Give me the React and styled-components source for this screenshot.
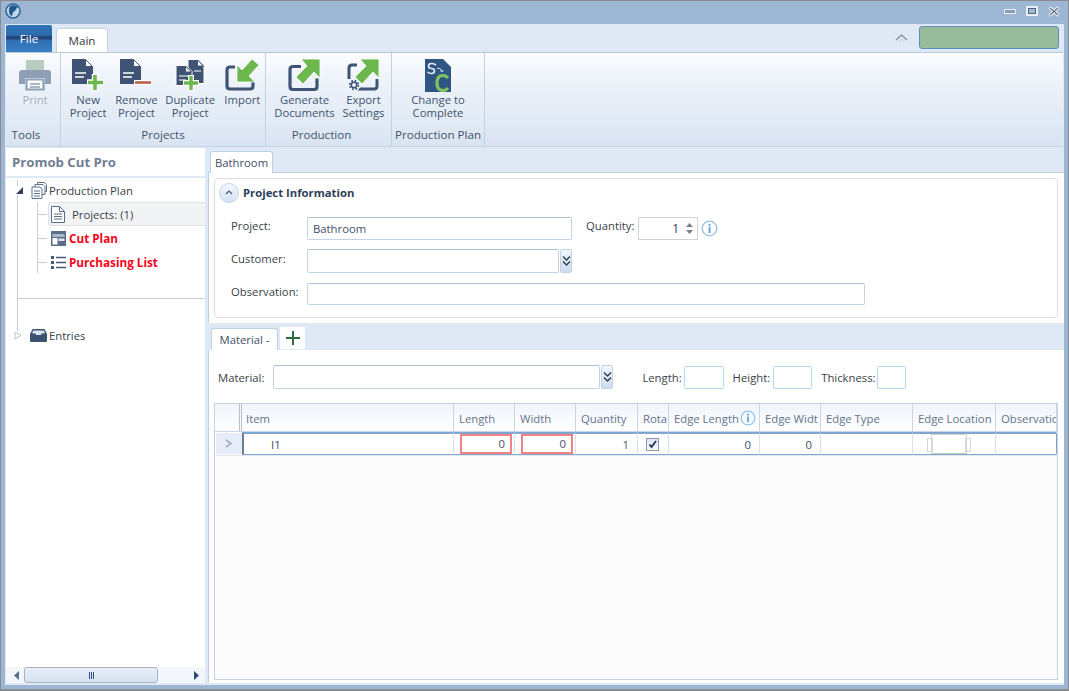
import React from "react";
import styled, { createGlobalStyle } from "styled-components";

const GlobalStyle = createGlobalStyle`
  html, body { margin: 0; padding: 0; height: 100%; overflow: hidden; }
  #root { height: 100%; }
  * { box-sizing: border-box; }
  body { font-family: "Open Sans", "Noto Sans", sans-serif; font-size: 11.3px; color: #2e3f57; }
`;

const NAVY = "#3f5474";
const GREEN = "#6db74f";

const Window = styled.div`
  width: 1069px;
  height: 691px;
  display: flex;
  flex-direction: column;
  background: #9cb6d3;
  border: 1px solid #8b8b8b;
  border-bottom-width: 2px;
  padding: 0 4px 4px 4px;
`;

const TitleBar = styled.div`
  height: 23px;
  flex: none;
  display: flex;
  align-items: center;
  justify-content: space-between;
  padding: 0 4px 3px 0;
`;

const WindowButtons = styled.div`
  display: flex;
  align-items: center;
  gap: 10px;
`;

const Shell = styled.div`
  flex: 1;
  min-height: 0;
  display: flex;
  flex-direction: column;
  background: #dfe8f5;
  padding: 0 0 2px 1px;
`;

const TabRow = styled.div`
  height: 28px;
  flex: none;
  display: flex;
  align-items: flex-end;
  gap: 4px;
  padding-right: 5px;
`;

const FileTab = styled.div`
  width: 46px;
  height: 27px;
  align-self: flex-end;
  display: flex;
  align-items: center;
  justify-content: center;
  color: #fff;
  font-size: 11.6px;
  border-radius: 2px 2px 0 0;
  background: linear-gradient(#2f72b6 0, #2c6cae 38%, #24487f 42%, #24487f 52%, #2e6fb2 56%, #3a80c4 100%);
`;

const MainTab = styled.div`
  width: 52px;
  height: 24px;
  display: flex;
  align-items: center;
  justify-content: center;
  color: #33363b;
  font-size: 11.6px;
  background: #fff;
  border: 1px solid #c6d3e4;
  border-bottom: none;
  border-radius: 3px 3px 0 0;
`;

const RightTools = styled.div`
  margin-left: auto;
  margin-bottom: 1px;
  display: flex;
  align-items: center;
  gap: 11px;
  align-self: center;
`;

const AccountBox = styled.div`
  width: 140px;
  height: 23px;
  background: #98bb9c;
  border: 1px solid #5f8fbf;
  border-radius: 3px;
`;

const Ribbon = styled.div`
  height: 95px;
  flex: none;
  display: flex;
  background: linear-gradient(#fbfcfe 0, #eef3fa 30%, #d9e4f2 100%);
  border-top: 1px solid #b9c9dd;
  border-bottom: 1px solid #c5d3e5;
  margin-right: 1px;
`;

const RibbonGroup = styled.div`
  width: ${p => p.$width}px;
  flex: none;
  display: flex;
  flex-direction: column;
  border-right: 1px solid #c3d0e1;
`;

const GroupButtons = styled.div`
  flex: 1;
  display: flex;
  justify-content: center;
  padding: 6px 0 0 ${p => p.$left || 0}px;
`;

const GroupLabel = styled.div`
  height: 21px;
  text-align: center;
  color: #43556e;
  font-size: 11.6px;
  line-height: 20px;
  padding-right: ${p => p.$shift || 0}px;
`;

const RibbonButton = styled.div`
  width: ${p => p.$width}px;
  display: flex;
  flex-direction: column;
  align-items: center;
  text-align: center;
  line-height: 13px;
  color: ${p => (p.$disabled ? "#a4adba" : "#40536f")};
`;

const ButtonIcon = styled.div`
  height: 34px;
  flex: none;
`;

const Body = styled.div`
  flex: 1;
  min-height: 0;
  display: flex;
  padding-top: 1px;
`;

const Sidebar = styled.div`
  width: 199px;
  flex: none;
  display: flex;
  flex-direction: column;
  background: #fff;
`;

const SidebarTitle = styled.div`
  height: 30px;
  flex: none;
  padding: 5px 0 0 6px;
  font-size: 13.200px;
  font-weight: 700;
  color: #6f7e94;
  border-bottom: 2px solid #dfe8f5;
`;

const TreeArea = styled.div`
  flex: 1;
  min-height: 0;
  position: relative;
  &::before {
    content: "";
    position: absolute;
    left: 11px;
    top: 2px;
    height: 155px;
    border-left: 1px solid #c9ced6;
  }
`;

const TreeRow = styled.div`
  height: 24px;
  display: flex;
  align-items: center;
  gap: ${p => p.$gap || 2}px;
  padding-left: ${p => p.$indent}px;
  color: ${p => (p.$alert ? "#f5051c" : "#3a3f48")};
  font-weight: ${p => (p.$alert ? 700 : 400)};
  font-size: ${p => (p.$alert ? 11.7 : 11.3)}px;
  position: relative;
  &::before {
    content: "";
    display: ${p => (p.$branch ? "block" : "none")};
    position: absolute;
    left: 31px;
    top: 12px;
    width: 10px;
    border-top: 1px solid #c9ced6;
  }
`;

const Expander = styled.div`
  width: 9px;
  height: 9px;
  display: flex;
  margin-right: 5px;
  position: relative;
  z-index: 1;
  background: #fff;
`;

const SelectedRow = styled(TreeRow)`
  background: #f2f3f4;
  border: 1px solid #dfe1e4;
  border-right: none;
  border-radius: 3px 0 0 3px;
  margin-left: 42px;
  padding-left: 2px;
  gap: 7px;
  &::before { display: block; left: -12px; top: 11px; }
`;

const TreeBranch = styled.div`
  position: relative;
  &::before {
    content: "";
    position: absolute;
    left: 31px;
    top: 0;
    height: 71px;
    border-left: 1px solid #c9ced6;
  }
`;

const TreeDivider = styled.div`
  margin: 24px 0 24px 11px;
  border-top: 1px solid #c9ced6;
`;

const HScroll = styled.div`
  height: 16px;
  flex: none;
  display: flex;
  align-items: center;
  background: #f3f7fc;
  padding: 0 6px 0 8px;
  justify-content: space-between;
`;

const ScrollThumb = styled.div`
  width: 134px;
  height: 16px;
  margin-left: 5px;
  margin-right: auto;
  border: 1px solid #aab4c0;
  border-radius: 3px;
  background: linear-gradient(#e8eef7, #d6e2f1);
  display: flex;
  align-items: center;
  justify-content: center;
  gap: 1px;
  i { width: 1px; height: 7px; background: #2e4a7a; }
`;

const Main = styled.div`
  flex: 1;
  min-width: 0;
  display: flex;
  flex-direction: column;
  margin-left: 3px;
`;

const DocStrip = styled.div`
  height: 25px;
  flex: none;
  display: flex;
  align-items: flex-end;
  padding-left: 2px;
  border-bottom: 1px solid #c0d0e3;
`;

const DocTab = styled.div`
  width: ${p => p.$width}px;
  height: 22px;
  display: flex;
  align-items: center;
  justify-content: center;
  background: #fff;
  color: #3f4f66;
  border: 1px solid #c0d0e3;
  border-bottom: none;
  border-radius: 3px 3px 0 0;
  margin-bottom: -1px;
`;

const InfoPane = styled.div`
  height: 150px;
  flex: none;
  background: #fff;
  padding: 5px 6px 5px 5px;
  border-left: 1px solid #c0d0e3;
`;

const InfoCard = styled.div`
  height: 140px;
  border: 1px solid #dcdfe3;
  border-radius: 4px;
  padding: 3px 4px;
`;

const InfoHeader = styled.div`
  display: flex;
  align-items: center;
  gap: 4px;
  height: 21px;
  font-size: 11.300px;
  font-weight: 700;
  color: #2e4058;
`;

const Collapse = styled.div`
  width: 20px;
  height: 20px;
  border-radius: 50%;
  border: 1px solid #c6d5e8;
  background: linear-gradient(#f4f7fc, #d6e2f2);
  display: flex;
  align-items: center;
  justify-content: center;
`;

const FormRow = styled.div`
  display: flex;
  align-items: center;
  height: ${p => p.$height}px;
  margin-top: ${p => p.$top || 0}px;
  padding-left: 12px;
`;

const FieldLabel = styled.div`
  width: ${p => p.$width}px;
  margin-left: ${p => p.$left || 0}px;
  flex: none;
  color: #3a3f48;
  padding-bottom: 6px;
`;

const Field = styled.div`
  width: ${p => p.$width}px;
  height: ${p => p.$height || 22}px;
  margin-left: ${p => p.$left || 0}px;
  flex: none;
  display: flex;
  align-items: center;
  padding: 0 5px;
  border: 1px solid #c3d3e6;
  border-top-color: #adc0d7;
  border-radius: 2px;
  background: #fff;
  color: #3f4f66;
`;

const Spinner = styled.div`
  width: 60px;
  height: 23px;
  flex: none;
  display: flex;
  align-items: center;
  justify-content: flex-end;
  gap: 7px;
  padding-right: 4px;
  border: 1px solid #d3d3d3;
  font-size: 12px;
  color: #2e3f57;
`;

const SpinArrows = styled.div`
  display: flex;
  flex-direction: column;
  gap: 3px;
`;

const InfoSlot = styled.span`
  height: 17px;
  margin-left: 3px;
`;

const ComboButton = styled.div`
  width: 12px;
  height: 24px;
  flex: none;
  margin-left: 1px;
  display: flex;
  align-items: center;
  justify-content: center;
  border: 1px solid #c3d3e6;
  border-radius: 2px;
  background: linear-gradient(#f1f5fb, #cfdcee);
`;

const MaterialStrip = styled.div`
  height: 27px;
  flex: none;
  display: flex;
  align-items: flex-end;
  gap: 2px;
  padding-left: 3px;
  border-bottom: 1px solid #dfe8f5;
`;

const AddTab = styled.div`
  width: 25px;
  height: 22px;
  background: #fff;
  display: flex;
  align-items: center;
  justify-content: center;
`;

const MaterialPane = styled.div`
  flex: 1;
  min-height: 0;
  display: flex;
  flex-direction: column;
  background: #fff;
  padding: 15px 6px 3px 5px;
  border-left: 1px solid #c0d0e3;
`;

const MaterialRow = styled.div`
  height: 24px;
  flex: none;
  display: flex;
  align-items: center;
  padding-left: 4px;
`;

const SizeLabel = styled.div`
  margin-left: ${p => p.$left}px;
  margin-right: ${p => p.$right ?? 2}px;
  color: #3a3f48;
`;

const SizeField = styled.div`
  width: ${p => p.$width}px;
  height: 23px;
  border: 1px solid #b5dcee;
  border-radius: 2px;
`;

const Grid = styled.div`
  flex: 1;
  min-height: 0;
  margin-top: 14px;
  background: #fbfbfb;
  border: 1px solid #c9d2e0;
`;

const COLUMNS = "27px 212px 61px 61px 62px 31px 91px 61px 92px 83px 1fr";

const HeaderRow = styled.div`
  height: 28px;
  display: grid;
  grid-template-columns: ${COLUMNS};
  background: linear-gradient(#f0f5fb, #ffffff);
  border-bottom: 1px solid #c8d6e8;
`;

const HeaderCell = styled.div`
  display: flex;
  align-items: center;
  gap: 1px;
  padding: 1px 0 0 ${p => p.$pad}px;
  overflow: hidden;
  white-space: nowrap;
  color: #64748c;
  border-right: 1px solid #c8d6e8;
  ${p => p.$double && "border-right: 3px double #b4c1d2;"}
`;

const DataRow = styled.div`
  height: 24px;
  display: grid;
  grid-template-columns: ${COLUMNS};
  border-bottom: 1px solid #e3e7ee;
`;

const RowHeader = styled.div`
  display: flex;
  align-items: center;
  justify-content: center;
  background: #e6edf7;
  border: 1px solid #fff;
  border-right: none;
`;

const Cell = styled.div`
  display: flex;
  align-items: center;
  justify-content: ${p => (p.$center ? "center" : p.$left ? "flex-start" : "flex-end")};
  padding-left: ${p => (p.$left ? 27 : 0)}px;
  padding-right: ${p => (p.$center ? p.$pad || 0 : 8)}px;
  background: #fff;
  color: #3f4f66;
  border-top: 2px solid #7fa5d0;
  border-bottom: 1px solid #7fa5d0;
  border-right: 1px solid #d6e3f1;
  ${p => p.$first && "border-left: 2px solid #6c7f99;"}
  ${p => p.$last && "border-right: 1px solid #7fa5d0; border-radius: 0 2px 2px 0;"}
`;

const InvalidCell = styled(Cell)`
  padding-right: 2px;
`;

const InvalidBox = styled.div`
  width: 52px;
  height: 20px;
  margin-top: -1px;
  padding-right: 5px;
  display: flex;
  align-items: center;
  justify-content: flex-end;
  border: 2px solid #f38383;
`;

const Check = styled.div`
  width: 13px;
  height: 13px;
  border: 1px solid #8d9cb2;
  background: linear-gradient(#dfe5ee, #f5f7fa);
  display: flex;
  align-items: center;
  justify-content: center;
`;

const EdgeBox = styled.div`
  width: 36px;
  height: 20px;
  background: #fff;
  border: 1px solid #d6d8d6;
  border-bottom-color: #b9d3b4;
  position: relative;
  &::before, &::after {
    content: "";
    position: absolute;
    top: 3px;
    width: 4px;
    height: 12px;
    border: 1px solid #d6d8d6;
  }
  &::before { left: -5px; }
  &::after { right: -5px; }
`;

const InfoIcon = ({ size = 17 }) => (
  <svg width={size} height={size} viewBox="0 0 17 17">
    <circle cx="8.5" cy="8.5" r="7.3" fill="none" stroke="#8fc0e8" strokeWidth="1.3" />
    <circle cx="8.5" cy="4.9" r="1.1" fill="#5ea3dc" />
    <rect x="7.6" y="7" width="1.9" height="6" fill="#5ea3dc" />
  </svg>
);

const DoubleChevron = () => (
  <svg width="9" height="12" viewBox="0 0 9 12">
    <path d="M1 1.5 4.5 5 8 1.5M1 6.5 4.5 10 8 6.5" fill="none" stroke="#2e4058" strokeWidth="1.5" />
  </svg>
);

const DocPlusIcon = () => (
  <svg width="32" height="33" viewBox="0 0 32 33">
    <path d="M0 0h13l8 8v17H0z" fill={NAVY} />
    <path d="M13.500.500 20.500 7.500h-7z" fill="#fff" stroke={NAVY} />
    <path d="M3 14h11M3 18h9" stroke="#fff" strokeWidth="1.300" />
    <path d="M23 15v17M15 23.500h16" stroke="#fff" strokeWidth="6.500" />
    <path d="M23 16v15M16 23.500h15" stroke={GREEN} strokeWidth="3.600" />
  </svg>
);

const DocMinusIcon = () => (
  <svg width="32" height="33" viewBox="0 0 32 33">
    <path d="M0 0h13l8 8v17H0z" fill={NAVY} />
    <path d="M13.500.500 20.500 7.500h-7z" fill="#fff" stroke={NAVY} />
    <path d="M3 14h11M3 18h9" stroke="#fff" strokeWidth="1.300" />
    <path d="M14 23.500h18" stroke="#fff" strokeWidth="5" />
    <path d="M15 23.500h16" stroke="#b9604e" strokeWidth="2.600" />
  </svg>
);

const DocCopyIcon = () => (
  <svg width="30" height="33" viewBox="0 0 30 33">
    <path d="M13 .500h10l6 6v18H13z" fill={NAVY} stroke="#fff" />
    <path d="M22.500 1 28.500 7h-6z" fill="#fff" stroke={NAVY} />
    <path d="M1 6.500h10l6 6v14H1z" fill={NAVY} stroke="#fff" />
    <path d="M10.500 7 16.500 13h-6z" fill="#fff" stroke={NAVY} />
    <path d="M4 17h9M4 21h7M19 12h7" stroke="#fff" strokeWidth="1.200" />
    <path d="M16 16v16M8 24h16" stroke="#fff" strokeWidth="6" />
    <path d="M16 17v14M9 24h14" stroke={GREEN} strokeWidth="3.400" />
  </svg>
);

const ImportIcon = () => (
  <svg width="34" height="32" viewBox="0 0 34 32">
    <path d="M10 8H5Q2 8 2 11v16q0 3 3 3h20q3 0 3-3v-5" fill="none" stroke={NAVY} strokeWidth="3.200" />
    <path d="M34 6 27 0 17 11l-5-5v17h18l-6-6z" fill={GREEN} stroke="#fff" strokeWidth=".8" />
  </svg>
);

const ExportIcon = ({ gear }) => (
  <svg width="33" height="33" viewBox="0 0 33 33">
    {gear
      ? <path d="M10 6H5Q2 6 2 9v11M10 30h17q3 0 3-3v-7" fill="none" stroke={NAVY} strokeWidth="3" />
      : <path d="M13 7.500H5Q2 7.500 2 10.500v17q0 3 3 3h21q3 0 3-3v-8" fill="none" stroke={NAVY} strokeWidth="3.200" />}
    <path d="M13 0h19v19l-6-6-11 12-7-7 11-11z" fill={GREEN} stroke="#fff" strokeWidth=".8" />
    {gear && (
      <g>
        <circle cx="7" cy="26" r="6.500" fill="#f2f5fa" />
        <circle cx="7" cy="26" r="4.300" fill="none" stroke={NAVY} strokeWidth="1.800" strokeDasharray="1.700 1.700" />
        <circle cx="7" cy="26" r="2.700" fill="none" stroke={NAVY} strokeWidth="1.500" />
      </g>
    )}
  </svg>
);

const PlanIcon = () => (
  <svg width="28" height="33" viewBox="0 0 28 33">
    <path d="M1 0h18l8 8v25H1z" fill="#2f5583" />
    <path d="M12 6Q10 4.500 7.500 4.500 4.500 4.500 4.500 7t3 2.500 3 2.500T7.500 14.500Q5 14.500 3.500 13" fill="none" stroke="#e4eefa" strokeWidth="1.600" />
    <path d="M13 9q4.500 0 5 3.500M16.500 11l1.500 2 1.800-1.800" fill="none" stroke="#d5e3f3" strokeWidth="1" />
    <path d="M24 19q-2-2.500-5-2.500-6 0-6 7.500t6 7.500q3 0 5-2.500" fill="none" stroke="#7fc45f" strokeWidth="3.200" />
  </svg>
);

const PrintIcon = () => (
  <svg width="34" height="33" viewBox="0 0 34 33">
    <rect x="8" y="1" width="18" height="11" fill="#b9ccc0" />
    <path d="M4 11h26q3 0 3 3v11h-6v-6H7v6H1V14q0-3 3-3z" fill="#8e9fb6" />
    <path d="M8.500 20.500h17v10h-17z" fill="#fff" stroke="#8e9fb6" strokeWidth="2.200" />
    <path d="M12 25h10M12 28h10" stroke="#8e9fb6" strokeWidth="1.300" />
  </svg>
);

const BooksIcon = () => (
  <svg width="16" height="18" viewBox="0 0 16 18">
    <g fill="#fff" stroke="#5c6f8c" strokeWidth="1">
      <path d="M6.500 1.500h7l2 2v7h-9z" />
      <path d="M4 3.500h8l2 2v8H4z" />
      <path d="M1 6h8l2 2v9.500H1z" />
    </g>
    <path d="M3 10h6M3 12.500h6M3 15h6" stroke="#5c6f8c" strokeWidth="1" />
  </svg>
);

const PageIcon = () => (
  <svg width="14" height="17" viewBox="0 0 14 17">
    <path d="M.500.500h8l5 5v11H.500z" fill="#fff" stroke="#5c6f8c" />
    <path d="M8.500.500v5h5M3 8h8M3 10.500h8M3 13h8" fill="none" stroke="#5c6f8c" />
  </svg>
);

const CutPlanIcon = () => (
  <svg width="15" height="15" viewBox="0 0 15 15">
    <rect width="15" height="15" fill="#5b6d88" />
    <rect x="1.500" y="3" width="12" height="3" fill="#aab7c9" />
    <rect x="1.500" y="7" width="5" height="6.500" fill="#fff" />
    <rect x="7.500" y="7.500" width="6" height="2.500" fill="#dfe6ef" />
  </svg>
);

const ListIcon = () => (
  <svg width="15" height="13" viewBox="0 0 15 13">
    <path d="M0 0h3v3H0zM0 5h3v3H0zM0 10h3v3H0z" fill="#45597a" />
    <path d="M5 1.500h10M5 6.500h10M5 11.500h10" stroke="#45597a" strokeWidth="1.300" />
  </svg>
);

const BoxIcon = () => (
  <svg width="17" height="14" viewBox="0 0 16 14" preserveAspectRatio="none">
    <path d="M2.500 1h11L16 6v7q0 1-1 1H1q-1 0-1-1V6z" fill="#3d5170" />
    <path d="M3 2.500h10L14 5.500H10.500V7h-5V5.500H2z" fill="#dce4ee" />
  </svg>
);

const Triangle = ({ open }) => (
  <svg width="9" height="9" viewBox="0 0 9 9">
    {open
      ? <path d="M8 1v7H1z" fill="#33415a" />
      : <path d="M1 1l6 3.500L1 8z" fill="#fff" stroke="#b7c9b9" />}
  </svg>
);

const DOC_BUTTONS = [
  { icon: <DocPlusIcon />, label: ["New", "Project"], width: 49 },
  { icon: <DocMinusIcon />, label: ["Remove", "Project"], width: 49 },
  { icon: <DocCopyIcon />, label: ["Duplicate", "Project"], width: 60 },
  { icon: <ImportIcon />, label: ["Import"], width: 46 },
];

const COLUMN_TITLES = ["", "Item", "Length", "Width", "Quantity", "Rota", "Edge Length", "Edge Widt", "Edge Type", "Edge Location", "Observatio"];

export default function App() {
  return (
    <Window>
      <GlobalStyle />
      <TitleBar>
        <svg width="16" height="16" viewBox="0 0 16 16">
          <circle cx="8" cy="8" r="7" fill="#c3d6e8" stroke="#2a6596" strokeWidth="1.500" />
          <path d="M5 3q5-2 8 1l-2 2-1 2-2 1-1 4-2-1q-2-5 0-9z" fill="#1f5a8c" />
        </svg>
        <WindowButtons>
          <svg width="12" height="5" viewBox="0 0 12 5"><rect x=".5" y=".5" width="11" height="4" fill="#8b9bb0" stroke="#e8eef5" /></svg>
          <svg width="12" height="10" viewBox="0 0 12 10"><rect x="1" y="1" width="10" height="8" fill="none" stroke="#e8eef5" strokeWidth="2" /><rect x="2.500" y="2.500" width="7" height="5" fill="none" stroke="#51667f" /></svg>
          <svg width="12" height="11" viewBox="0 0 12 11"><path d="M1.500 1.500l9 8M10.500 1.500l-9 8" stroke="#edf2f7" strokeWidth="3.400" /><path d="M2 2l8 7M10 2 2 9" stroke="#5f7186" strokeWidth="1.200" /></svg>
        </WindowButtons>
      </TitleBar>
      <Shell>
        <TabRow>
          <FileTab>File</FileTab>
          <MainTab>Main</MainTab>
          <RightTools>
            <svg width="13" height="8" viewBox="0 0 13 8"><path d="M1 6l5.500-5L12 6" fill="none" stroke="#8d949c" strokeWidth="1.500" /><path d="M4 7.500l2.500-2.500L9 7.500" fill="none" stroke="#c2c6cb" /></svg>
            <AccountBox />
          </RightTools>
        </TabRow>
        <Ribbon>
          <RibbonGroup $width={55}>
            <GroupButtons $left={4}>
              <RibbonButton $width={50} $disabled><ButtonIcon><PrintIcon /></ButtonIcon><div>Print</div></RibbonButton>
            </GroupButtons>
            <GroupLabel $shift={14}>Tools</GroupLabel>
          </RibbonGroup>
          <RibbonGroup $width={205}>
            <GroupButtons $left={3}>
              {DOC_BUTTONS.map(b => (
                <RibbonButton key={b.label[0]} $width={b.width}>
                  <ButtonIcon>{b.icon}</ButtonIcon>
                  {b.label.map(line => <div key={line}>{line}</div>)}
                </RibbonButton>
              ))}
            </GroupButtons>
            <GroupLabel>Projects</GroupLabel>
          </RibbonGroup>
          <RibbonGroup $width={126}>
            <GroupButtons $left={7}>
              <RibbonButton $width={64}><ButtonIcon><ExportIcon /></ButtonIcon><div>Generate</div><div>Documents</div></RibbonButton>
              <RibbonButton $width={56}><ButtonIcon><ExportIcon gear /></ButtonIcon><div>Export</div><div>Settings</div></RibbonButton>
            </GroupButtons>
            <GroupLabel $shift={14}>Production</GroupLabel>
          </RibbonGroup>
          <RibbonGroup $width={93}>
            <GroupButtons>
              <RibbonButton $width={80}><ButtonIcon><PlanIcon /></ButtonIcon><div>Change to</div><div>Complete</div></RibbonButton>
            </GroupButtons>
            <GroupLabel>Production Plan</GroupLabel>
          </RibbonGroup>
        </Ribbon>
        <Body>
          <Sidebar>
            <SidebarTitle>Promob Cut Pro</SidebarTitle>
            <TreeArea>
              <TreeRow $indent={9}>
                <Expander><Triangle open /></Expander>
                <BooksIcon />
                <div>Production Plan</div>
              </TreeRow>
              <TreeBranch>
                <SelectedRow $indent={0}>
                  <PageIcon />
                  <div>Projects: (1)</div>
                </SelectedRow>
                <TreeRow $indent={45} $gap={3} $alert $branch><CutPlanIcon /><div>Cut Plan</div></TreeRow>
                <TreeRow $indent={45} $gap={3} $alert $branch><ListIcon /><div>Purchasing List</div></TreeRow>
              </TreeBranch>
              <TreeDivider />
              <TreeRow $indent={8}>
                <Expander><Triangle /></Expander>
                <BoxIcon />
                <div>Entries</div>
              </TreeRow>
            </TreeArea>
            <HScroll>
              <svg width="5" height="9" viewBox="0 0 5 9"><path d="M5 0v9L0 4.500z" fill="#5a6d8a" /></svg>
              <ScrollThumb><i /><i /><i /></ScrollThumb>
              <svg width="5" height="9" viewBox="0 0 5 9"><path d="M0 0v9l5-4.500z" fill="#2e4a7a" /></svg>
            </HScroll>
          </Sidebar>
          <Main>
            <DocStrip>
              <DocTab $width={63}>Bathroom</DocTab>
            </DocStrip>
            <InfoPane>
              <InfoCard>
                <InfoHeader>
                  <Collapse>
                    <svg width="8" height="5" viewBox="0 0 8 5"><path d="M1 4l3-3 3 3" fill="none" stroke="#3f5474" strokeWidth="1.200" /></svg>
                  </Collapse>
                  Project Information
                </InfoHeader>
                <FormRow $height={24} $top={13}>
                  <FieldLabel $width={76}>Project:</FieldLabel>
                  <Field $width={265} $height={23}>Bathroom</Field>
                  <FieldLabel $width={52} $left={14}>Quantity:</FieldLabel>
                  <Spinner>
                    1
                    <SpinArrows>
                      <svg width="7" height="4" viewBox="0 0 7 4"><path d="M0 4l3.500-4L7 4z" fill="#7b8088" /></svg>
                      <svg width="7" height="4" viewBox="0 0 7 4"><path d="M0 0l3.500 4L7 0z" fill="#7b8088" /></svg>
                    </SpinArrows>
                  </Spinner>
                  <InfoSlot><InfoIcon /></InfoSlot>
                </FormRow>
                <FormRow $height={24} $top={9}>
                  <FieldLabel $width={76}>Customer:</FieldLabel>
                  <Field $width={252} $height={24} />
                  <ComboButton><DoubleChevron /></ComboButton>
                </FormRow>
                <FormRow $height={22} $top={10}>
                  <FieldLabel $width={76}>Observation:</FieldLabel>
                  <Field $width={558} />
                </FormRow>
              </InfoCard>
            </InfoPane>
            <MaterialStrip>
              <DocTab $width={67}>Material -</DocTab>
              <AddTab>
                <svg width="14" height="14" viewBox="0 0 14 14"><path d="M7 0v14M0 7h14" stroke="#2f6b3f" strokeWidth="2" /></svg>
              </AddTab>
            </MaterialStrip>
            <MaterialPane>
              <MaterialRow>
                <SizeLabel $left={0}>Material:</SizeLabel>
                <Field $width={327} $height={24} $left={7} />
                <ComboButton><DoubleChevron /></ComboButton>
                <SizeLabel $left={29}>Length:</SizeLabel>
                <SizeField $width={40} />
                <SizeLabel $left={9} $right={3}>Height:</SizeLabel>
                <SizeField $width={39} />
                <SizeLabel $left={9} $right={1}>Thickness:</SizeLabel>
                <SizeField $width={29} />
              </MaterialRow>
              <Grid>
                <HeaderRow>
                  {COLUMN_TITLES.map((title, i) => (
                    <HeaderCell key={title || "corner"} $double={i === 0} $pad={i === 1 ? 4 : 5}>
                      {title}
                      {title === "Edge Length" && <InfoIcon size={16} />}
                    </HeaderCell>
                  ))}
                </HeaderRow>
                <DataRow>
                  <RowHeader>
                    <svg width="8" height="9" viewBox="0 0 8 9"><path d="M1 1l5 3.500L1 8" fill="none" stroke="#9eb0c8" strokeWidth="1.600" /></svg>
                  </RowHeader>
                  <Cell $left $first>I1</Cell>
                  <InvalidCell><InvalidBox>0</InvalidBox></InvalidCell>
                  <InvalidCell><InvalidBox>0</InvalidBox></InvalidCell>
                  <Cell>1</Cell>
                  <Cell $center $pad={2}>
                    <Check>
                      <svg width="9" height="9" viewBox="0 0 9 9"><path d="M1.500 4.500l2 2.500L8 1" fill="none" stroke="#1f3556" strokeWidth="1.800" /></svg>
                    </Check>
                  </Cell>
                  <Cell>0</Cell>
                  <Cell>0</Cell>
                  <Cell />
                  <Cell $center $pad={11}><EdgeBox /></Cell>
                  <Cell $last />
                </DataRow>
              </Grid>
            </MaterialPane>
          </Main>
        </Body>
      </Shell>
    </Window>
  );
}
